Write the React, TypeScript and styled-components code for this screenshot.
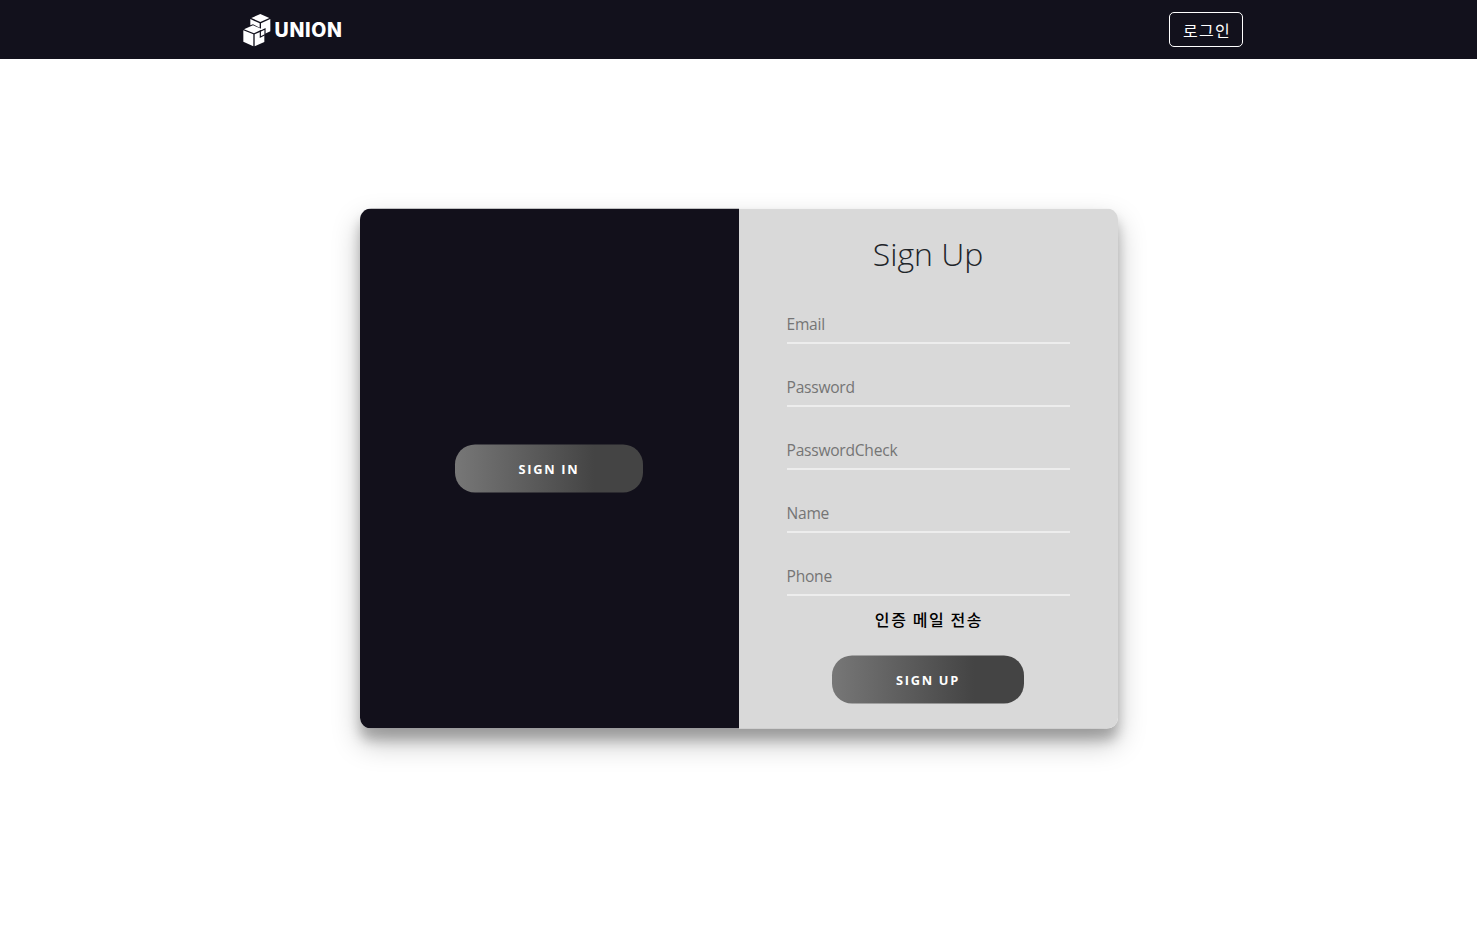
import React from "react";
import styled, { createGlobalStyle } from "styled-components";

const GlobalStyle = createGlobalStyle`
  *, *::before, *::after { box-sizing: border-box; }
  body {
    margin: 0;
    background: #fff;
    font-family: "Open Sans", "Noto Sans CJK KR", sans-serif;
    font-size: 16px;
    color: #212529;
  }
`;

const Page = styled.div`
  height: 928px;
  display: flex;
  flex-direction: column;
  overflow: hidden;
`;

const Header = styled.header`
  height: 59px;
  flex: none;
  background: #12111c;
  display: flex;
  justify-content: center;
`;

const HeaderInner = styled.div`
  width: 1009px;
  padding-left: 8px;
  display: flex;
  align-items: center;
  justify-content: space-between;
`;

const Brand = styled.a`
  display: flex;
  align-items: center;
  color: #fff;
  text-decoration: none;
`;

const BrandName = styled.span`
  margin-left: 3.5px;
  font: 800 19.5px/24px Inter, sans-serif;
  letter-spacing: 0.7px;
`;

const LoginButton = styled.button`
  width: 74px;
  height: 35px;
  padding: 1px 0 0 2px;
  border: 1px solid #fff;
  border-radius: 5px;
  background: transparent;
  color: #fff;
  font: 400 16px/24px "Noto Sans CJK KR", sans-serif;
  letter-spacing: 1.2px;
`;

const Main = styled.main`
  flex: 1;
  display: flex;
  justify-content: center;
  align-items: flex-start;
  padding-top: 150px;
`;

const Card = styled.section`
  width: 758px;
  height: 520px;
  display: flex;
  border-radius: 11.2px;
  overflow: hidden;
  transform: translateY(-0.5px);
  box-shadow: 0 14.4px 27.2px rgba(0, 0, 0, 0.25), 0 11.2px 11.2px rgba(0, 0, 0, 0.22);
`;

const SignInPanel = styled.div`
  width: 50%;
  display: flex;
  align-items: center;
  justify-content: center;
  background: #12101b;
`;

const SignUpForm = styled.form`
  width: 50%;
  display: flex;
  flex-direction: column;
  align-items: center;
  padding: 26px 48px 0;
  background: #d9d9d9;
`;

const Title = styled.h2`
  margin: 0 0 29px;
  font-size: 32px;
  font-weight: 300;
  line-height: 38px;
`;

const Field = styled.input`
  width: 100%;
  height: 39px;
  flex: none;
  margin: 3px 0 21px;
  padding: 1px 0 0;
  border: 0;
  border-bottom: 2px solid #ededed;
  outline: 0;
  background: transparent;
  transform: translateY(0.5px);
  font: 400 15.6px/24px "Open Sans", sans-serif;
  letter-spacing: -0.25px;
  &::placeholder { color: #757575; opacity: 1; }
`;

const SendMail = styled.button`
  margin: -10px 0 25px;
  padding: 0 0 0 2px;
  border: 0;
  background: transparent;
  color: #000;
  font: 500 16px/24px "Noto Sans CJK KR", sans-serif;
  letter-spacing: 1.6px;
`;

const PillButton = styled.button<{ $width: number }>`
  width: ${({ $width }) => $width}px;
  height: 48px;
  flex: none;
  padding: 0 0 1px;
  border: 0;
  border-radius: 20px;
  background: linear-gradient(90deg, #777 0%, #444 74%);
  color: #fff;
  font: 700 12.8px/20px "Open Sans", sans-serif;
  letter-spacing: 1.7px;
`;

const CubesLogo = () => (
  <svg width="29" height="34" viewBox="21 23 87 102" aria-hidden="true">
    <g fill="#fff">
      <path d="M76 26 L103 38 L76 50 L49 38 Z" />
      <path d="M46 41 L74 54 V67 L54 57 L46 60 Z" />
      <path d="M78 54 L106 41 V78 L90 85 L78 72 Z" />
      <path d="M54 60 L82 72 L57 84 L27 72 Z" />
      <path d="M25 75 L55 87 V123 L25 109 Z" />
      <path d="M59 87 L88 75 V110 L59 123 Z" />
    </g>
    <path d="M76 78 L90 71 V88 L76 95 Z" fill="#fff" stroke="#12111c" strokeWidth="3.5" />
  </svg>
);

const fields = [
  { name: "email", label: "Email", type: "email" },
  { name: "password", label: "Password", type: "password" },
  { name: "passwordCheck", label: "PasswordCheck", type: "password" },
  { name: "name", label: "Name", type: "text" },
  { name: "phone", label: "Phone", type: "tel" },
];

export default function App() {
  return (
    <Page>
      <GlobalStyle />
      <Header>
        <HeaderInner>
          <Brand>
            <CubesLogo />
            <BrandName>UNION</BrandName>
          </Brand>
          <LoginButton type="button">로그인</LoginButton>
        </HeaderInner>
      </Header>
      <Main>
        <Card>
          <SignInPanel>
            <PillButton type="button" $width={188}>SIGN IN</PillButton>
          </SignInPanel>
          <SignUpForm>
            <Title>Sign Up</Title>
            {fields.map((field) => (
              <Field key={field.name} name={field.name} type={field.type} placeholder={field.label} />
            ))}
            <SendMail type="button">인증 메일 전송</SendMail>
            <PillButton type="button" $width={192}>SIGN UP</PillButton>
          </SignUpForm>
        </Card>
      </Main>
    </Page>
  );
}
